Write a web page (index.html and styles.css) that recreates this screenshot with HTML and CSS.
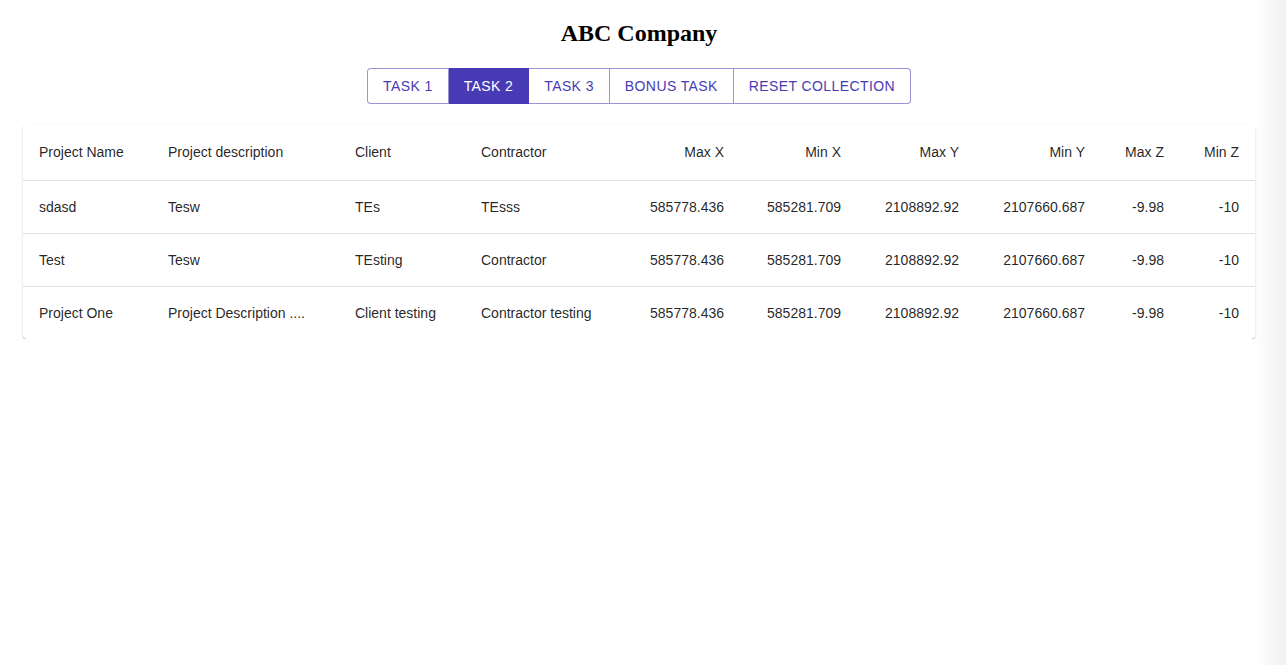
FILE: index.html
```html
<!DOCTYPE html>
<html lang="en">
<head>
<meta charset="utf-8">
<title>ABC Company</title>
<link rel="stylesheet" href="styles.css">
</head>
<body>
<div class="app">
  <h2 class="title">ABC Company</h2>
  <div class="btn-row">
    <div class="btn-group">
      <button class="btn">Task 1</button>
      <button class="btn active">Task 2</button>
      <button class="btn">Task 3</button>
      <button class="btn">Bonus Task</button>
      <button class="btn">Reset Collection</button>
    </div>
  </div>
  <div class="paper">
    <table class="grid">
      <colgroup>
        <col class="c1"><col class="c2"><col class="c3"><col class="c4"><col class="c5">
        <col class="c6"><col class="c7"><col class="c8"><col class="c9"><col class="c10">
      </colgroup>
      <thead>
        <tr>
          <th>Project Name</th>
          <th>Project description</th>
          <th>Client</th>
          <th>Contractor</th>
          <th class="num">Max X</th>
          <th class="num">Min X</th>
          <th class="num">Max Y</th>
          <th class="num">Min Y</th>
          <th class="num">Max Z</th>
          <th class="num">Min Z</th>
        </tr>
      </thead>
      <tbody>
        <tr>
          <td>sdasd</td><td>Tesw</td><td>TEs</td><td>TEsss</td>
          <td class="num">585778.436</td><td class="num">585281.709</td><td class="num">2108892.92</td><td class="num">2107660.687</td><td class="num">-9.98</td><td class="num">-10</td>
        </tr>
        <tr>
          <td>Test</td><td>Tesw</td><td>TEsting</td><td>Contractor</td>
          <td class="num">585778.436</td><td class="num">585281.709</td><td class="num">2108892.92</td><td class="num">2107660.687</td><td class="num">-9.98</td><td class="num">-10</td>
        </tr>
        <tr class="last">
          <td>Project One</td><td>Project Description ....</td><td>Client testing</td><td>Contractor testing</td>
          <td class="num">585778.436</td><td class="num">585281.709</td><td class="num">2108892.92</td><td class="num">2107660.687</td><td class="num">-9.98</td><td class="num">-10</td>
        </tr>
      </tbody>
    </table>
  </div>
</div>
<div class="edge-shade"></div>
</body>
</html>
```

FILE: styles.css
```css
html, body {
  background: #ffffff;
}
body {
  margin: 8px 16px 8px 8px;
  font-family: "Liberation Serif", "Times New Roman", serif;
}
.title {
  text-align: center;
  font-size: 24px;
  font-weight: bold;
  margin: 12px 0 21px;
  line-height: normal;
  color: #000;
}
.btn-row {
  display: flex;
  justify-content: center;
}
.btn-group {
  display: flex;
  border-radius: 4px;
}
.btn {
  font-family: "Liberation Sans", Helvetica, Arial, sans-serif;
  font-size: 14px;
  font-weight: 400;
  line-height: 24px;
  letter-spacing: 0.4px;
  text-transform: uppercase;
  color: #473bb5;
  background: #ffffff;
  border: 1px solid rgba(71, 59, 181, 0.55);
  border-left-width: 0;
  padding: 5px 15px;
  margin: 0;
  cursor: pointer;
}
.btn:first-child {
  border-left-width: 1px;
  border-radius: 4px 0 0 4px;
}
.btn:last-child {
  border-radius: 0 4px 4px 0;
}
.btn.active {
  background: #473bb5;
  color: #ffffff;
  border-color: #473bb5;
}
.paper {
  margin: 21px 15px 0;
  background: #fff;
  border-radius: 4px;
  box-shadow: 0 2px 1px -1px rgba(0,0,0,0.28), 0 1px 1px 0 rgba(0,0,0,0.16), 0 1px 3px 0 rgba(0,0,0,0.12);
  overflow: hidden;
}
.grid {
  width: 100%;
  border-collapse: collapse;
  table-layout: fixed;
  font-family: "Liberation Sans", Helvetica, Arial, sans-serif;
  font-size: 14px;
  color: rgba(0,0,0,0.87);
}
.c1 { width: 129px; }
.c2 { width: 187px; }
.c3 { width: 126px; }
.c4 { width: 160px; }
.c5 { width: 115px; }
.c6 { width: 117px; }
.c7 { width: 118px; }
.c8 { width: 126px; }
.c9 { width: 79px; }
.c10 { width: 75px; }
.grid th, .grid td {
  padding: 16px;
  text-align: left;
  border-bottom: 1px solid #e0e0e0;
  white-space: nowrap;
  overflow: hidden;
}
.grid th {
  font-weight: 400;
  line-height: 23px;
}
.grid td {
  line-height: 20px;
}
.grid .num {
  text-align: right;
}
.grid tr.last td {
  border-bottom: 0;
}
.edge-shade {
  position: fixed;
  top: 0;
  right: 0;
  width: 32px;
  height: 100%;
  background: linear-gradient(to right, rgba(0,0,0,0), rgba(0,0,0,0.055));
  pointer-events: none;
}
```
